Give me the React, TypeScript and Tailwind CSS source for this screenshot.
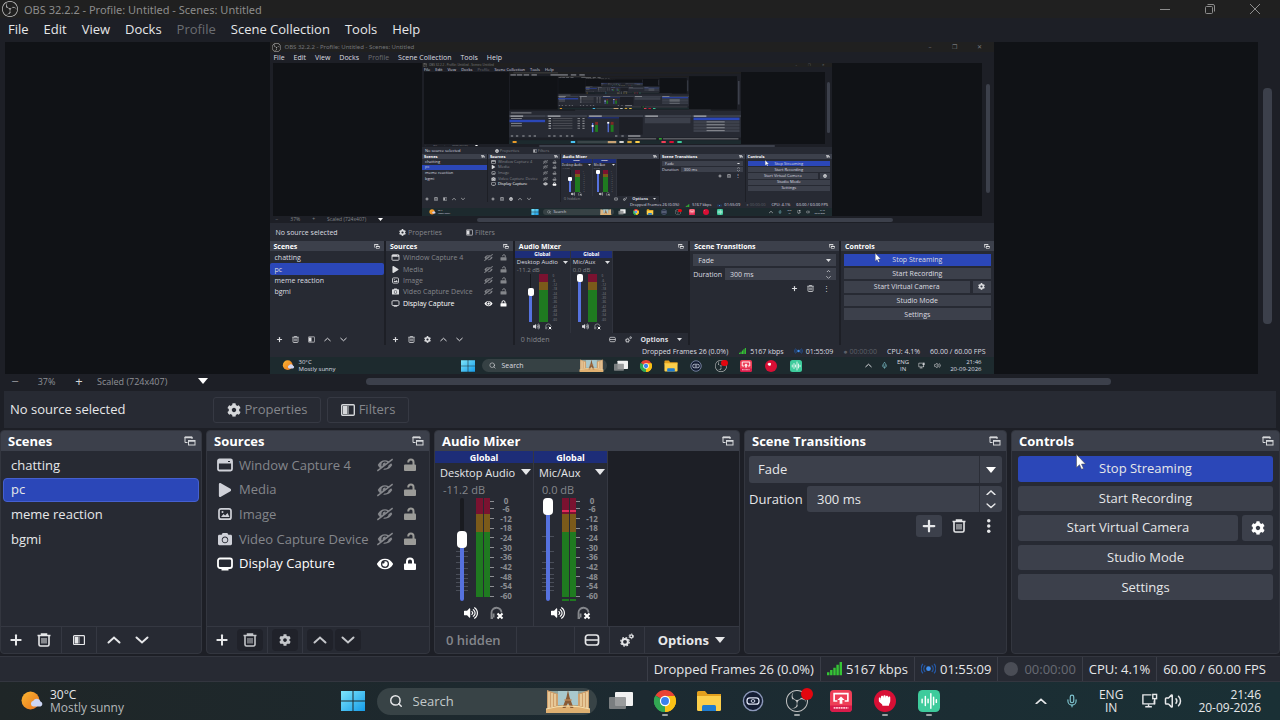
import React, { useState } from 'react';
import { FaCamera, FaCog, FaEye, FaEyeSlash, FaHandRock, FaPlay, FaVolumeUp } from 'react-icons/fa';
import { SiObsstudio } from 'react-icons/si';
import { Mic, Plus, Search, Volume2 } from 'lucide-react';

type IconProps = { className?: string };

const MENUS = ['File', 'Edit', 'View', 'Docks', 'Profile', 'Scene Collection', 'Tools', 'Help'];
const SCENES = ['chatting', 'pc', 'meme reaction', 'bgmi'];
const DB_MARKS = ['-6', '-12', '-18', '-24', '-30', '-36', '-42', '-48', '-54', '-60'];

/* ---------- icons ---------- */

const ObsIcon: React.FC<IconProps> = ({ className }) => <SiObsstudio className={`text-[#c4c4c4] ${className}`} />;

const PopoutIcon: React.FC<IconProps> = ({ className }) => (
  <svg viewBox="0 0 12 10" className={className} fill="none" stroke="currentColor">
    <path d="M3.500 6.500h-2.500v-5.500h7v2" />
    <path d="M.5 1.500h8" strokeWidth="1.400" />
    <rect x="4.500" y="4.500" width="6.500" height="4.500" />
    <path d="M4.500 5h6.500" strokeWidth="1.400" />
  </svg>
);

const CaretDown: React.FC<IconProps> = ({ className }) => (
  <svg viewBox="0 0 10 6" className={className} fill="currentColor">
    <path d="M0 0h10L5 6z" />
  </svg>
);

const Chevron: React.FC<IconProps> = ({ className }) => (
  <svg viewBox="0 0 14 8" className={className} fill="none" stroke="currentColor" strokeWidth="2" strokeLinecap="round">
    <path d="M1.500 6.500L7 1.500l5.500 5" />
  </svg>
);

const TrashIcon: React.FC<IconProps> = ({ className }) => (
  <svg viewBox="0 0 14 14" className={className} fill="none" stroke="currentColor">
    <path d="M.5 2.500h13M4.500 2.500V1h5v1.500" strokeWidth="1.500" />
    <path d="M2 3v8.500q0 1.500 1.500 1.500h7q1.500 0 1.500-1.500V3" strokeWidth="1.600" />
    <path d="M5 5v5.500M7 5v5.500M9 5v5.500" />
  </svg>
);

const FilterIcon: React.FC<IconProps> = ({ className }) => (
  <svg viewBox="0 0 14 12" className={className}>
    <rect x=".7" y=".7" width="12.600" height="10.600" rx="1" fill="none" stroke="currentColor" strokeWidth="1.400" />
    <rect x="2" y="2" width="4" height="8" fill="currentColor" />
    <rect x="6" y="2" width="2" height="8" fill="currentColor" opacity=".5" />
  </svg>
);

const WindowIcon: React.FC<IconProps> = ({ className }) => (
  <svg viewBox="0 0 16 14" className={className}>
    <rect x="1" y="1.500" width="14" height="11" rx="1.500" fill="none" stroke="currentColor" strokeWidth="1.800" />
    <path d="M1 2h14v3.500H1z" fill="currentColor" />
    <path d="M11 3.500h2" stroke="#272a33" />
  </svg>
);

const ImageIcon: React.FC<IconProps> = ({ className }) => (
  <svg viewBox="0 0 16 14" className={className}>
    <rect x="2" y="1.800" width="12" height="10.400" rx="2" fill="none" stroke="currentColor" strokeWidth="1.700" />
    <path d="M4 10l2.500-3 1.700 1.500L10.500 6 12.500 10z" fill="currentColor" />
    <circle cx="5.500" cy="5" r="1" fill="currentColor" />
  </svg>
);

const DisplayIcon: React.FC<IconProps> = ({ className }) => (
  <svg viewBox="0 0 16 14" className={className}>
    <rect x="1" y="1.500" width="14" height="9.500" rx="2" fill="none" stroke="currentColor" strokeWidth="1.800" />
    <path d="M4.500 12.500h7" stroke="currentColor" strokeWidth="1.800" />
  </svg>
);

const LockIcon: React.FC<IconProps & { open?: boolean }> = ({ className, open }) => (
  <svg viewBox="0 0 14 14" className={className}>
    <rect x="1" y="6.500" width="12" height="6.500" rx="1" fill="currentColor" />
    <path
      d={open ? 'M10.500 7V4a2.600 2.600 0 0 0-5.200 0v.6' : 'M4 7V4.400a3 3 0 0 1 6 0V7'}
      fill="none"
      stroke="currentColor"
      strokeWidth="2"
    />
  </svg>
);

const MonitorOffIcon: React.FC<IconProps> = ({ className }) => (
  <svg viewBox="0 0 14 14" className={className} fill="none">
    <path d="M3 12H1.500V7a5 5 0 0 1 10-.5" stroke="#85878c" strokeWidth="1.800" />
    <path d="M3.500 7.500v4" stroke="#85878c" strokeWidth="2" />
    <path d="M7.500 7.500l5 5M12.500 7.500l-5 5" stroke="#fff" strokeWidth="2" />
  </svg>
);

const GearsIcon: React.FC<IconProps> = ({ className }) => (
  <svg viewBox="0 0 14 14" className={className} fill="none" stroke="currentColor">
    <circle cx="5" cy="8.800" r="2.900" strokeWidth="2" />
    <circle cx="5" cy="8.800" r="4.300" strokeWidth="1.200" strokeDasharray="1.690 1.690" />
    <circle cx="11.300" cy="3.300" r="1.500" strokeWidth="1.300" />
    <circle cx="11.300" cy="3.300" r="2.400" strokeWidth=".8" strokeDasharray="1.250 1.250" />
  </svg>
);

const LayoutIcon: React.FC<IconProps> = ({ className }) => (
  <svg viewBox="0 0 16 14" className={className} fill="none" stroke="currentColor" strokeWidth="1.700">
    <rect x="1.500" y="2" width="13" height="10" rx="2.500" />
    <path d="M1.500 7h13" />
  </svg>
);

const SignalIcon: React.FC<IconProps> = ({ className }) => (
  <svg viewBox="0 0 16 14" className={className} fill="#35c535">
    <path d="M0 11h2.600v3H0zM3.300 8.500h2.600V14H3.300zM6.700 6h2.600v8H6.700zM10 3h2.600v11H10zM13.400 0H16v14h-2.600z" />
  </svg>
);

const LiveIcon: React.FC<IconProps> = ({ className }) => (
  <svg viewBox="0 0 16 12" className={className} fill="none" stroke="#2459a8" strokeWidth="1.400">
    <circle cx="8" cy="6" r="2.500" fill="#3f8ff0" stroke="none" />
    <path d="M4.500 2.500a5 5 0 0 0 0 7M11.500 2.500a5 5 0 0 1 0 7M2 1a8 8 0 0 0 0 10M14 1a8 8 0 0 1 0 10" />
  </svg>
);

const WeatherIcon: React.FC<IconProps> = ({ className }) => (
  <svg viewBox="0 0 24 20" className={className}>
    <defs>
      <linearGradient id="sun" x1="0" y1="0" x2="1" y2="1">
        <stop offset="0" stopColor="#fbb733" />
        <stop offset="1" stopColor="#e8731c" />
      </linearGradient>
    </defs>
    <circle cx="10.500" cy="9.500" r="9" fill="url(#sun)" />
    <path d="M13 15.500a3 3 0 0 1 .3-5.800 4 4 0 0 1 7.200.8 2.600 2.600 0 0 1 0 5z" fill="#cdd6f3" />
  </svg>
);

const WindowsIcon: React.FC<IconProps> = ({ className }) => (
  <svg viewBox="0 0 24 20" className={className}>
    <defs>
      <linearGradient id="win" x1="0" y1="0" x2="1" y2="1">
        <stop offset="0" stopColor="#7ee6fb" />
        <stop offset="1" stopColor="#159be8" />
      </linearGradient>
    </defs>
    <path d="M0 0h11.500v9.500H0zM12.500 0H24v9.500H12.500zM0 10.500h11.500V20H0zM12.500 10.500H24V20H12.500z" fill="url(#win)" />
  </svg>
);

const LandmarkPicture: React.FC<IconProps> = ({ className }) => (
  <svg viewBox="0 0 46 24" className={className}>
    <path d="M3 2h40l1 19H2z" fill="#8fa39c" />
    <path d="M13 2h20v14H13z" fill="#a9c8cc" />
    <path d="M1 20q22-8 44 0v4H1z" fill="#e0b071" />
    <path d="M2 1l11 4v12L2 20zM44 1L33 5v12l11 3z" fill="#cfa06c" />
    <path d="M4 3v16M7 4v14M10 5v12M36 5v12M39 4v14M42 3v16" stroke="#f5ddb0" strokeWidth="1.300" />
    <path d="M23 1l1.500 7 4 11h-3L23 14l-2.500 5h-3l4-11z" fill="#8a5a34" />
    <path d="M19 11h8" stroke="#c98f5a" />
    <path d="M1 20q22-6 44 0" fill="none" stroke="#f7e0ae" />
  </svg>
);

const TaskViewIcon: React.FC<IconProps> = ({ className }) => (
  <svg viewBox="0 0 24 20" className={className}>
    <rect x="6" y="1" width="18" height="14" rx="1" fill="#f1f1f1" />
    <rect x="0" y="6" width="17" height="12" rx="1" fill="#8b8d8e" opacity=".85" />
  </svg>
);

const ChromeIcon: React.FC<IconProps> = ({ className }) => (
  <svg viewBox="0 0 24 24" className={className}>
    <path d="M12 12L1.600 6A12 12 0 0 1 22.400 6z" fill="#e94335" />
    <path d="M12 12L22.400 6A12 12 0 0 1 12 24z" fill="#fbc116" />
    <path d="M12 12v12A12 12 0 0 1 1.600 6z" fill="#32a753" />
    <path d="M12 6.500h10.600A12 12 0 0 1 12 24l5-9.200z" fill="#fbc116" />
    <path d="M1.600 6l5.500 9L12 18l0 6A12 12 0 0 1 1.600 6z" fill="#32a753" />
    <circle cx="12" cy="12" r="5.600" fill="#fff" />
    <circle cx="12" cy="12" r="4.300" fill="#3a80ee" />
  </svg>
);

const FolderIcon: React.FC<IconProps> = ({ className }) => (
  <svg viewBox="0 0 24 22" className={className}>
    <path d="M0 2.500Q0 1 1.500 1H8l2.500 3H24v4H0z" fill="#e2a01e" />
    <path d="M0 6h24v13.500q0 1.500-1.500 1.500h-21Q0 21 0 19.500z" fill="#fccf4b" />
    <path d="M5 21v-4.500Q5 15 6.500 15h11q1.500 0 1.500 1.500V21z" fill="#1f7cd0" />
  </svg>
);

const CapsuleIcon: React.FC<IconProps> = ({ className }) => (
  <svg viewBox="0 0 24 24" className={className} fill="none" stroke="#8d99bb">
    <circle cx="12" cy="12" r="10.500" fill="#141d33" strokeWidth="1.500" />
    <rect x="5.500" y="8.500" width="13" height="7" rx="3" stroke="#dfe5f5" strokeWidth="1.400" />
    <rect x="10" y="10.500" width="4" height="3" rx="1.500" stroke="#dfe5f5" />
  </svg>
);

const CastIcon: React.FC<IconProps> = ({ className }) => (
  <svg viewBox="0 0 24 24" className={className}>
    <rect width="24" height="24" rx="4" fill="#ee3f57" />
    <path d="M0 17h24v3q0 4-4 4H4q-4 0-4-4z" fill="#d81b4a" />
    <path d="M8 12H4.500V4h15v8H16" fill="none" stroke="#fff" strokeWidth="1.800" />
    <path d="M12 7l4 4h-2.500v4h-3v-4H8z" fill="#fff" />
    <path d="M4 19.500h16" stroke="#ffc3cd" strokeWidth="2" strokeDasharray="2 .6" />
  </svg>
);

const FistIcon: React.FC<IconProps> = ({ className }) => (
  <svg viewBox="0 0 24 24" className={className}>
    <circle cx="12" cy="12" r="12" fill="#d80f35" />
    <FaHandRock x="5" y="5" width="14" height="14" color="#fff" />
  </svg>
);

const WaveIcon: React.FC<IconProps> = ({ className }) => (
  <svg viewBox="0 0 24 24" className={className}>
    <rect width="24" height="24" rx="5" fill="#3ecb9c" />
    <path d="M4.500 10v4M8 7v10M11 10v4M14 4v16M17 8v8M20 10.500v3" stroke="#fff" strokeWidth="1.600" strokeLinecap="round" />
  </svg>
);

const NetworkIcon: React.FC<IconProps> = ({ className }) => (
  <svg viewBox="0 0 18 16" className={className} fill="none" stroke="currentColor" strokeWidth="1.500">
    <path d="M11 2H2v9.500h12V8" />
    <path d="M4.500 14.500h7M8 12v2.500" />
    <rect x="12.500" y="1.500" width="4" height="4.500" />
    <path d="M14.500 6v6" />
  </svg>
);

const SOURCES = [
  { name: 'Window Capture 4', Icon: WindowIcon, on: false },
  { name: 'Media', Icon: FaPlay, on: false },
  { name: 'Image', Icon: ImageIcon, on: false },
  { name: 'Video Capture Device', Icon: FaCamera, on: false },
  { name: 'Display Capture', Icon: DisplayIcon, on: true },
];

const APPS = [
  { name: 'Chrome', Icon: ChromeIcon, running: true },
  { name: 'File Explorer', Icon: FolderIcon, running: false },
  { name: 'Capsule', Icon: CapsuleIcon, running: false },
  { name: 'OBS Studio', Icon: ObsIcon, running: true },
  { name: 'Cast', Icon: CastIcon, running: false },
  { name: 'Fist', Icon: FistIcon, running: true },
  { name: 'Wave', Icon: WaveIcon, running: true },
];

/* ---------- captured desktop shown in the preview ---------- */

// Far levels of the screen-in-screen tunnel are only blocks of colour
const FarScreen: React.FC<{ depth: number }> = ({ depth }) => (
  <g>
    <rect width="1280" height="720" fill="#1d1f26" />
    <rect width="1280" height="18" fill="#202020" />
    <rect x="24" y="5" width="246" height="8" fill="#4a4a4a" />
    {[8, 43, 81, 124, 229, 341, 388].map((x) => (
      <rect key={x} x={x} y="25" width={x === 229 ? 96 : 30} height="9" fill="#a9abaf" />
    ))}
    <rect x="5" y="42" width="1253" height="332" fill="#101216" />
    <rect x="1263" y="90" width="9" height="235" fill="#3c404b" />
    <rect x="365" y="377" width="748" height="7" fill="#3c404b" />
    <rect x="0" y="390" width="1280" height="265" fill="#272a33" />
    <rect x="10" y="404" width="114" height="10" fill="#84868b" />
    {[0, 206, 434, 744, 1011].map((x, i) => (
      <g key={x}>
        <rect x={x} y="431" width={[202, 224, 306, 263, 269][i]} height="20" fill="#3c404b" />
        <rect x={x + 8} y="436" width="70" height="10" fill="#c9cacd" />
      </g>
    ))}
    <rect x="3" y="478" width="196" height="24" fill="#2b47b8" />
    {[460, 509, 534].map((y) => (
      <rect key={y} x="11" y={y} width="60" height="9" fill="#8d8f94" />
    ))}
    {[460, 485, 509, 534, 558].map((y) => (
      <g key={y}>
        <rect x="218" y={y} width="14" height="10" fill="#b5b7bc" />
        <rect x="240" y={y} width="110" height="7" fill="#5d5f65" />
        <rect x="378" y={y} width="14" height="9" fill="#8b8d92" />
        <rect x="405" y={y} width="12" height="11" fill="#8b8d92" />
      </g>
    ))}
    <rect x="608" y="452" width="130" height="174" fill="#1d1f26" />
    <rect x="434" y="452" width="173" height="12" fill="#1d2d78" />
    {[458, 544].map((x) => (
      <g key={x}>
        <rect x={x} y="510" width="7" height="92" fill="#5672df" />
        <rect x={x - 2} y={x === 458 ? 531 : 499} width="11" height="17" fill="#fff" />
        <rect x={x + 17} y="499" width="16" height="30" fill="#7d2a25" />
        <rect x={x + 17} y="529" width="16" height="70" fill="#1f7a20" />
      </g>
    ))}
    {[10, 38, 73, 108, 136, 216, 244, 279, 314, 342, 585, 620].map((x) => (
      <rect key={x} x={x} y="635" width="13" height="10" fill="#a0a2a7" />
    ))}
    <rect x="657" y="635" width="68" height="10" fill="#c9cacd" />
    <rect x="749" y="456" width="252" height="57" fill="#3c404b" />
    <rect x="1018" y="456" width="254" height="26" fill="#2b47b8" />
    {[486, 515, 545, 574].map((y) => (
      <g key={y}>
        <rect x="1018" y={y} width="254" height="26" fill="#3c404b" />
        <rect x="1090" y={y + 9} width="100" height="8" fill="#a0a2a7" />
      </g>
    ))}
    <rect x="656" y="664" width="156" height="9" fill="#808287" />
    <rect x="827" y="662" width="16" height="13" fill="#35c535" />
    <rect x="850" y="664" width="416" height="9" fill="#808287" />
    <rect y="682" width="1280" height="38" fill="#1d2a2e" />
    <rect x="20" y="690" width="22" height="20" fill="#e89a2a" />
    <rect x="341" y="690" width="24" height="20" fill="#49c2f1" />
    <rect x="377" y="688" width="220" height="25" fill="#3a4548" />
    <rect x="545" y="690" width="46" height="22" fill="#c9a374" />
    <rect x="609" y="690" width="24" height="20" fill="#d0d0d0" />
    <rect x="653" y="689" width="24" height="22" fill="#d8a63a" />
    <rect x="697" y="690" width="24" height="20" fill="#fccf4b" />
    <rect x="841" y="690" width="24" height="20" fill="#ee3f57" />
    <rect x="885" y="690" width="24" height="20" fill="#d80f35" />
    <rect x="929" y="690" width="24" height="20" fill="#3ecb9c" />
    {depth > 0 && (
      <g transform="translate(269 42) scale(.5656 .461)">
        <FarScreen depth={depth - 1} />
      </g>
    )}
  </g>
);

const NEAR = {
  frame: 'h-[332px] w-[724px] text-[7px]',
  title: 'h-[10px] gap-[4px] px-[2px] text-[6px]',
  logo: 'size-[9px]',
  winButtons: 'gap-[20px] pr-[10px]',
  menu: 'h-[11px] gap-[9px] px-[4px]',
  previewPad: 'pl-[3px]',
  sideBar: 'w-[12px] px-[4px]',
  zoomRow: 'h-[7px] text-[5px]',
  zoomLeft: 'w-[119px] gap-[12px] px-[6px]',
  track: 'h-[4px]',
  context: 'h-[18px] pl-[6px]',
  contextLabel: 'w-[115px]',
  contextButton: 'h-[14px] w-[60px] gap-[2px]',
  docks: 'h-[104px] gap-[2px]',
  header: 'h-[10px] px-[4px]',
  popout: 'w-[6px]',
  rows: 'h-[58px] pt-[1px]',
  row: 'rounded-[2px] px-[5px]',
  rowIcon: 'w-[9px] h-[7px]',
  rowGap: 'gap-[3px]',
  rowRight: 'gap-[6px]',
  toolbar: 'h-[12px] gap-[9px] px-[6px]',
  toolIcon: 'size-[7px]',
  channel: 'w-[56px]',
  channelSmall: 'w-[42px]',
  global: 'h-[7px] text-[5px]',
  channelName: 'h-[8px] px-[2px] text-[6px]',
  caret: 'w-[5px]',
  db: 'h-[8px] text-[6px] px-[2px]',
  meters: 'h-[48px] gap-[5px]',
  fader: 'w-[3px]',
  thumb: 'h-[8px] w-[6px] rounded-[2px]',
  meter: 'w-[9px]',
  marks: 'text-[3px] leading-[4px]',
  mute: 'h-[9px] gap-[5px]',
  form: 'gap-[2px] p-[3px]',
  field: 'h-[12px] px-[5px]',
  controls: 'h-[66px] gap-[2px]',
  cog: 'w-[18px]',
  cursor: 'left-[34px] top-[2px] w-[6px]',
  status: 'h-[12px] gap-[10px] pr-[8px]',
  statusIcon: 'h-[6px] w-[9px]',
  taskbar: 'h-[17px] px-[12px]',
  weather: 'gap-[4px] text-[6px] leading-[7px]',
  weatherIcon: 'w-[13px]',
  apps: 'gap-[11px]',
  app: 'w-[14px] h-[12px]',
  search: '-mx-[4px] h-[13px] w-[125px] gap-[6px] pl-[7px] pr-[3px]',
  tray: 'gap-[9px]',
  clock: 'text-[6px] leading-[7px]',
};

const MID: typeof NEAR = {
  frame: 'h-[153px] w-[410px] text-[4px]',
  title: 'h-[4px] gap-[2px] px-[1px] text-[3px]',
  logo: 'size-[4px]',
  winButtons: 'gap-[11px] pr-[6px]',
  menu: 'h-[5px] gap-[5px] px-[2px]',
  previewPad: 'pl-[2px]',
  sideBar: 'w-[7px] px-[2px]',
  zoomRow: 'h-[3px] text-[2px]',
  zoomLeft: 'w-[67px] gap-[7px] px-[3px]',
  track: 'h-[2px]',
  context: 'h-[7px] pl-[3px]',
  contextLabel: 'w-[65px]',
  contextButton: 'h-[6px] w-[34px] gap-[1px]',
  docks: 'h-[48px] gap-[1px]',
  header: 'h-[5px] px-[2px]',
  popout: 'w-[4px]',
  rows: 'h-[28px]',
  row: 'px-[3px]',
  rowIcon: 'w-[5px] h-[4px]',
  rowGap: 'gap-[2px]',
  rowRight: 'gap-[4px]',
  toolbar: 'h-[6px] gap-[5px] px-[3px]',
  toolIcon: 'size-[4px]',
  channel: 'w-[32px]',
  channelSmall: 'w-[24px]',
  global: 'h-[4px] text-[2px]',
  channelName: 'h-[4px] px-[1px] text-[3px]',
  caret: 'w-[3px]',
  db: 'h-[3px] text-[2px] px-[1px]',
  meters: 'h-[22px] gap-[3px]',
  fader: 'w-[2px]',
  thumb: 'h-[4px] w-[4px] rounded-[1px]',
  meter: 'w-[5px]',
  marks: 'text-[1px] leading-[1px]',
  mute: 'h-[4px] gap-[3px]',
  form: 'gap-[1px] p-[2px]',
  field: 'h-[5px] px-[3px]',
  controls: 'h-[30px] gap-[1px]',
  cog: 'w-[10px]',
  cursor: 'left-[19px] top-[1px] w-[4px]',
  status: 'h-[6px] gap-[6px] pr-[4px]',
  statusIcon: 'h-[3px] w-[5px]',
  taskbar: 'h-[8px] px-[7px]',
  weather: 'gap-[2px] text-[2px] leading-[3px]',
  weatherIcon: 'w-[7px]',
  apps: 'gap-[6px]',
  app: 'w-[8px] h-[6px]',
  search: '-mx-[2px] h-[6px] w-[71px] gap-[3px] pl-[4px] pr-[2px]',
  tray: 'gap-[5px]',
  clock: 'text-[2px] leading-[3px]',
};

const CursorArrow: React.FC<IconProps> = ({ className }) => (
  <svg viewBox="0 0 10 16" className={className}>
    <path d="M.5.5v13l3-2.800 2 4.600 2-.8-2-4.500h4z" fill="#fff" stroke="#444" strokeWidth=".5" />
  </svg>
);

const CapturedDock: React.FC<{ t: typeof NEAR; title: string; children: React.ReactNode }> = ({ t, title, children }) => (
  <div className="flex min-w-0 flex-col overflow-hidden bg-[#272a33]">
    <div className={`flex shrink-0 items-center justify-between bg-[#3c404b] font-bold text-white ${t.header}`}>
      <span>{title}</span>
      <PopoutIcon className={t.popout} />
    </div>
    {children}
  </div>
);

const CapturedChannel: React.FC<{ t: typeof NEAR; name: string; db: string; width: string; level: string }> = ({
  t,
  name,
  db,
  width,
  level,
}) => (
  <div className={`flex shrink-0 flex-col border-r border-[#30333d] bg-[#272a33] ${width}`}>
    <div className={`flex items-center justify-center bg-[#1d2d78] font-bold text-white ${t.global}`}>Global</div>
    <div className={`flex items-center justify-between ${t.channelName}`}>
      <span>{name}</span>
      <CaretDown className={t.caret} />
    </div>
    <div className={`flex items-center text-[#84868b] ${t.db}`}>{db}</div>
    <div className={`flex justify-center ${t.meters}`}>
      <div className="flex flex-col items-center">
        <div className={level} />
        <div className={`shrink-0 bg-white ${t.thumb}`} />
        <div className={`flex-1 bg-[#5672df] ${t.fader}`} />
      </div>
      <div className={`flex flex-col ${t.meter}`}>
        <div className="flex-[16] bg-[#7a1230]" />
        <div className="flex-[18] bg-[#7b5a1a]" />
        <div className="flex-[66] bg-[#1f7a20]" />
      </div>
      <div className={`flex flex-col text-[#84868b] ${t.marks}`}>
        {['0', ...DB_MARKS].map((mark) => (
          <div key={mark} className="flex min-h-0 flex-1 items-center">{mark}</div>
        ))}
      </div>
    </div>
    <div className={`flex items-center justify-center ${t.mute}`}>
      <FaVolumeUp className={t.toolIcon} />
      <MonitorOffIcon className={t.toolIcon} />
    </div>
  </div>
);

const CapturedScreen: React.FC<{ t: typeof NEAR; children: React.ReactNode }> = ({ t, children }) => (
  <div className={`flex shrink-0 flex-col overflow-hidden whitespace-nowrap bg-[#1d1f26] leading-none text-[#dcdde0] ${t.frame}`}>
    <div className={`flex shrink-0 items-center bg-[#202020] font-['Noto_Sans',sans-serif] text-[#75777a] ${t.title}`}>
      <ObsIcon className={t.logo} />
      <span className="flex-1">OBS 32.2.2 - Profile: Untitled - Scenes: Untitled</span>
      <div className={`flex ${t.winButtons}`}>
        <span>–</span>
        <span>❐</span>
        <span>✕</span>
      </div>
    </div>
    <div className={`flex shrink-0 items-center ${t.menu}`}>
      {MENUS.map((menu) => (
        <span key={menu} className={menu === 'Profile' ? 'text-[#6b6d72]' : ''}>{menu}</span>
      ))}
    </div>
    <div className={`flex min-h-0 flex-1 ${t.previewPad}`}>
      <div className="flex flex-1 items-center justify-center bg-[#101216]">{children}</div>
      <div className={`flex flex-col ${t.sideBar}`}>
        <div className="flex-[14]" />
        <div className="flex-[71] rounded-full bg-[#3c404b]" />
        <div className="flex-[15]" />
      </div>
    </div>
    <div className={`flex shrink-0 items-center text-[#84868b] ${t.zoomRow}`}>
      <div className={`flex shrink-0 items-center ${t.zoomLeft}`}>
        <span>−</span>
        <span>37%</span>
        <span>+</span>
        <span>Scaled (724x407)</span>
        <CaretDown className={`shrink-0 text-white ${t.caret}`} />
      </div>
      <div className={`flex flex-1 ${t.track}`}>
        <div className="flex-[15]" />
        <div className="flex-[70] rounded-full bg-[#3c404b]" />
        <div className="flex-[17]" />
      </div>
    </div>
    <div className={`flex shrink-0 items-center bg-[#272a33] ${t.context}`}>
      <span className={t.contextLabel}>No source selected</span>
      <div className={`flex items-center justify-center text-[#84868b] ${t.contextButton}`}>
        <FaCog className={`text-[#dcdde0] ${t.toolIcon}`} />
        Properties
      </div>
      <div className={`flex items-center justify-center text-[#84868b] ${t.contextButton}`}>
        <FilterIcon className={`text-[#dcdde0] ${t.toolIcon}`} />
        Filters
      </div>
    </div>
    <div className={`grid shrink-0 grid-cols-[202fr_224fr_306fr_263fr_269fr] ${t.docks}`}>
      <CapturedDock t={t} title="Scenes">
        <div className={`grid grid-rows-5 ${t.rows}`}>
          {SCENES.map((scene) => (
            <div key={scene} className={`flex items-center ${t.row} ${scene === 'pc' ? 'bg-[#2b47b8]' : ''}`}>{scene}</div>
          ))}
        </div>
        <div className={`mt-auto flex items-center ${t.toolbar}`}>
          <Plus className={t.toolIcon} strokeWidth={4} />
          <TrashIcon className={t.toolIcon} />
          <FilterIcon className={t.toolIcon} />
          <Chevron className={t.toolIcon} />
          <Chevron className={`rotate-180 ${t.toolIcon}`} />
        </div>
      </CapturedDock>
      <CapturedDock t={t} title="Sources">
        <div className={`grid grid-rows-5 ${t.rows}`}>
          {SOURCES.map(({ name, Icon, on }) => (
            <div key={name} className={`flex items-center ${t.row} ${t.rowGap} ${on ? 'text-white' : 'text-[#84868b]'}`}>
              <Icon className={`shrink-0 text-[#dcdde0] ${t.rowIcon}`} />
              <span className="min-w-0 flex-1">{name}</span>
              <div className={`flex shrink-0 ${t.rowRight}`}>
                {on ? <FaEye className={t.rowIcon} /> : <FaEyeSlash className={`-scale-x-100 ${t.rowIcon}`} />}
                <LockIcon className={t.rowIcon} open={!on} />
              </div>
            </div>
          ))}
        </div>
        <div className={`mt-auto flex items-center ${t.toolbar}`}>
          <Plus className={t.toolIcon} strokeWidth={4} />
          <TrashIcon className={t.toolIcon} />
          <FaCog className={t.toolIcon} />
          <Chevron className={t.toolIcon} />
          <Chevron className={`rotate-180 ${t.toolIcon}`} />
        </div>
      </CapturedDock>
      <CapturedDock t={t} title="Audio Mixer">
        <div className="flex min-h-0 flex-1 bg-[#1d1f26]">
          <CapturedChannel t={t} name="Desktop Audio" db="-11.2 dB" width={t.channel} level="h-[30%] w-px bg-[#16181d]" />
          <CapturedChannel t={t} name="Mic/Aux" db="0.0 dB" width={t.channelSmall} level="h-0" />
        </div>
        <div className={`flex shrink-0 items-center ${t.toolbar}`}>
          <span className="flex-1 text-[#84868b]">0 hidden</span>
          <LayoutIcon className={t.toolIcon} />
          <GearsIcon className={t.toolIcon} />
          <span className="font-bold">Options</span>
          <CaretDown className={t.caret} />
        </div>
      </CapturedDock>
      <CapturedDock t={t} title="Scene Transitions">
        <div className={`flex flex-col ${t.form}`}>
          <div className={`flex items-center justify-between bg-[#3c404b] ${t.field}`}>
            <span>Fade</span>
            <CaretDown className={t.caret} />
          </div>
          <div className={`flex items-center ${t.rowGap}`}>
            <span>Duration</span>
            <div className={`flex flex-1 items-center justify-between bg-[#3c404b] ${t.field}`}>
              <span>300 ms</span>
              <div className="flex h-full flex-col justify-around">
                <Chevron className={t.caret} />
                <Chevron className={`rotate-180 ${t.caret}`} />
              </div>
            </div>
          </div>
          <div className={`flex items-center justify-end ${t.toolbar}`}>
            <Plus className={t.toolIcon} strokeWidth={4} />
            <TrashIcon className={t.toolIcon} />
            <span>⋮</span>
          </div>
        </div>
      </CapturedDock>
      <CapturedDock t={t} title="Controls">
        <div className={`relative ${t.form}`}>
          <div className={`grid grid-rows-5 ${t.controls}`}>
            <div className="flex items-center justify-center bg-[#2b47b8]">Stop Streaming</div>
            <div className="flex items-center justify-center bg-[#3c404b]">Start Recording</div>
            <div className={`flex ${t.rowGap}`}>
              <div className="flex flex-1 items-center justify-center bg-[#3c404b]">Start Virtual Camera</div>
              <div className={`flex items-center justify-center bg-[#3c404b] ${t.cog}`}>
                <FaCog className={t.toolIcon} />
              </div>
            </div>
            <div className="flex items-center justify-center bg-[#3c404b]">Studio Mode</div>
            <div className="flex items-center justify-center bg-[#3c404b]">Settings</div>
          </div>
          <CursorArrow className={`absolute ${t.cursor}`} />
        </div>
      </CapturedDock>
    </div>
    <div className={`flex shrink-0 items-center justify-end bg-[#272a33] ${t.status}`}>
      <span>Dropped Frames 26 (0.0%)</span>
      <div className={`flex items-center ${t.rowGap}`}>
        <SignalIcon className={t.statusIcon} />
        5167 kbps
      </div>
      <div className={`flex items-center ${t.rowGap}`}>
        <LiveIcon className={t.statusIcon} />
        01:55:09
      </div>
      <span className="text-[#5d6068]">● 00:00:00</span>
      <span>CPU: 4.1%</span>
      <span>60.00 / 60.00 FPS</span>
    </div>
    <div className={`grid shrink-0 grid-cols-[1fr_auto_1fr] items-center bg-[#1d2a2e] ${t.taskbar}`}>
      <div className={`flex items-center ${t.weather}`}>
        <WeatherIcon className={t.weatherIcon} />
        <div>
          <div>30°C</div>
          <div>Mostly sunny</div>
        </div>
      </div>
      <div className={`flex items-center ${t.apps}`}>
        <WindowsIcon className={t.app} />
        <div className={`flex items-center rounded-full bg-[#364144] ${t.search}`}>
          <Search className={t.toolIcon} />
          <span className="flex-1">Search</span>
          <LandmarkPicture className="h-full" />
        </div>
        <TaskViewIcon className={t.app} />
        {APPS.map(({ name, Icon }) => (
          <div key={name} className="relative">
            <Icon className={t.app} />
            {name === 'OBS Studio' && <span className="absolute right-0 top-0 h-1/2 w-1/2 rounded-full bg-[#e3060f]" />}
          </div>
        ))}
      </div>
      <div className={`flex items-center justify-end ${t.tray}`}>
        <Chevron className={t.toolIcon} />
        <Mic className={`text-[#7fc4cf] ${t.toolIcon}`} />
        <div className={`text-center ${t.clock}`}>
          <div>ENG</div>
          <div>IN</div>
        </div>
        <NetworkIcon className={t.toolIcon} />
        <Volume2 className={t.toolIcon} />
        <div className={`text-right ${t.clock}`}>
          <div>21:46</div>
          <div>20-09-2026</div>
        </div>
      </div>
    </div>
  </div>
);

/* ---------- main window ---------- */

const Dock: React.FC<{ title: string; children: React.ReactNode }> = ({ title, children }) => (
  <section className="flex min-w-0 flex-col overflow-hidden rounded-sm border border-[#33363f] bg-[#272a33]">
    <header className="flex h-5 shrink-0 items-center justify-between bg-[#3c404b] pl-[7px] pr-[5px]">
      <h2 className="text-[13px] font-bold text-white">{title}</h2>
      <button type="button" aria-label={`Undock ${title}`}>
        <PopoutIcon className="w-3 text-[#d5d7da]" />
      </button>
    </header>
    {children}
  </section>
);

const ToolButton: React.FC<{ label: string; dim?: boolean; children: React.ReactNode }> = ({ label, dim, children }) => (
  <button
    type="button"
    aria-label={label}
    className={`flex h-[22px] w-[26px] items-center justify-center rounded-sm ${dim ? 'bg-[#20222a] text-[#c4c6ca]' : 'text-[#e6e7e9]'}`}
  >
    {children}
  </button>
);

const Divider = () => <div className="mx-0.5 h-full w-px bg-[#353842]" />;

type ChannelProps = {
  name: string;
  db: string;
  value: number;
  peak?: boolean;
  className: string;
  faderClass: string;
  ticks: number[];
};

const Channel: React.FC<ChannelProps> = ({ name, db, value, peak, className, faderClass, ticks }) => {
  const [volume, setVolume] = useState(value);
  return (
    <div className={`flex shrink-0 flex-col border-r border-[#353842] bg-[#272a33] ${className}`}>
      <div className="flex h-3 items-center justify-center bg-[#1d2d78] text-[9px] font-bold text-white">Global</div>
      <button type="button" className="flex h-[18px] items-center justify-between pl-[5px] pr-0.5 text-[11px] text-[#e6e7e9]">
        {name}
        <CaretDown className="w-2.5" />
      </button>
      <div className="flex h-[17px] items-center pl-2 text-[11px] text-[#84868b]">{db}</div>
      <div className="flex h-[103px]">
        <div className={`relative w-3 ${faderClass}`}>
          <div className="absolute inset-y-0 left-1 w-1 rounded-full bg-[#191b20]" />
          {ticks.map((top) => (
            <div key={top} className="absolute inset-x-0 h-px bg-[#4a4e59]" style={{ top }} />
          ))}
          <div className="absolute bottom-0 left-1 w-1 rounded-full bg-[#5672df]" style={{ height: `${volume}%` }} />
          <input
            type="range"
            aria-label={`${name} volume`}
            min={0}
            max={100}
            value={volume}
            onChange={(e) => setVolume(Number(e.target.value))}
            className="absolute inset-0 h-full w-full appearance-none bg-transparent [direction:rtl] [writing-mode:vertical-lr] [&::-webkit-slider-thumb]:h-[17px] [&::-webkit-slider-thumb]:w-[10px] [&::-webkit-slider-thumb]:appearance-none [&::-webkit-slider-thumb]:rounded-[4px] [&::-webkit-slider-thumb]:bg-white"
          />
        </div>
        <div className="ml-2 flex w-3.5 gap-px">
          {[0, 1].map((bar) => (
            <div key={bar} className="flex flex-1 flex-col">
              <div className="flex h-4 flex-col justify-end bg-[#7a1230] pb-0.5">
                {peak && <div className="h-0.5 bg-[#e02a5a]" />}
              </div>
              <div className="h-[18px] bg-[#7b5a1a]" />
              <div className="h-[65px] bg-[#1f7a20]" />
              {peak && <div className="mt-0.5 h-0.5 bg-[#1f7a20]" />}
            </div>
          ))}
        </div>
        <div className="flex flex-col text-[8px] font-bold text-[#8b8d92]">
          {['0', ...DB_MARKS].map((mark) => (
            <div key={mark} className={`flex items-center ${mark === '0' ? 'h-[6px]' : 'min-h-0 flex-1'}`}>
              <span className="h-px w-1 bg-[#8b8d92]" />
              <span className="w-5 pl-1 text-center leading-none">{mark}</span>
            </div>
          ))}
        </div>
      </div>
      <div className="flex h-6 items-center justify-center gap-3">
        <button type="button" aria-label={`Mute ${name}`}>
          <FaVolumeUp className="size-3.5 text-white" />
        </button>
        <button type="button" aria-label={`Monitor ${name}`}>
          <MonitorOffIcon className="size-3.5" />
        </button>
      </div>
    </div>
  );
};

const controlButton = 'flex min-h-0 flex-1 items-center justify-center rounded-[3px] bg-[#3c404b]';

const App: React.FC = () => {
  const [scene, setScene] = useState('pc');

  return (
    <div className="flex min-h-screen flex-col whitespace-nowrap bg-[#1d1f26] font-['Open_Sans','Noto_Sans',sans-serif] text-[13px] leading-none text-[#e6e7e9]">
      {/* Title bar */}
      <header className="flex h-[18px] shrink-0 items-center bg-[#202020] pl-0.5 font-['Noto_Sans',sans-serif] text-[11px] text-[#8c8c8c]">
        <ObsIcon className="size-4" />
        <h1 className="ml-1.5 flex-1">OBS 32.2.2 - Profile: Untitled - Scenes: Untitled</h1>
        <div className="flex items-center gap-[35px] pr-5">
          <button type="button" aria-label="Minimize">
            <svg viewBox="0 0 10 10" className="size-2.5" stroke="currentColor"><path d="M0 5.500h10" /></svg>
          </button>
          <button type="button" aria-label="Restore">
            <svg viewBox="0 0 10 10" className="size-2.5" stroke="currentColor" fill="none">
              <rect x=".5" y="2.500" width="7" height="7" rx="1" />
              <path d="M2.500.5h5.500q1.500 0 1.500 1.500v5.500" />
            </svg>
          </button>
          <button type="button" aria-label="Close">
            <svg viewBox="0 0 10 10" className="size-2.5" stroke="currentColor"><path d="M0 0l10 10M10 0L0 10" /></svg>
          </button>
        </div>
      </header>

      <nav className="flex h-6 shrink-0 items-center gap-[15px] px-2 pb-0.5">
        {MENUS.map((menu) => (
          <button key={menu} type="button" disabled={menu === 'Profile'} className="disabled:text-[#6b6d72]">
            {menu}
          </button>
        ))}
      </nav>

      {/* Preview */}
      <main className="flex min-h-[332px] flex-1 pl-[5px]">
        <div className="flex flex-1 items-center justify-center overflow-hidden bg-[#101216]">
          <CapturedScreen t={NEAR}>
            <CapturedScreen t={MID}>
              <svg viewBox="0 0 1280 720" preserveAspectRatio="none" className="h-[72px] w-[232px]">
                <FarScreen depth={3} />
              </svg>
            </CapturedScreen>
          </CapturedScreen>
        </div>
        <div className="flex w-[22px] flex-col pl-[5px] pr-2">
          <div className="flex-[14]" />
          <div className="flex-[71] rounded-sm bg-[#3c404b]" />
          <div className="flex-[15]" />
        </div>
      </main>
      <div className="flex h-3.5 shrink-0 items-center pr-[22px] text-[9px] text-[#8f9196]">
        <div className="flex w-[208px] shrink-0 items-center pl-2.5">
          <button type="button" aria-label="Zoom out" className="w-2.5 text-[13px]">−</button>
          <span className="w-[53px] text-center">37%</span>
          <button type="button" aria-label="Zoom in" className="w-3 text-[13px] text-[#d5d7da]">+</button>
          <select aria-label="Preview scaling" className="ml-3 w-[101px] appearance-none bg-transparent">
            <option>Scaled (724x407)</option>
          </select>
          <CaretDown className="w-2.5 text-white" />
        </div>
        <div className="flex h-[7px] flex-1">
          <div className="flex-[15]" />
          <div className="flex-[71] rounded-sm bg-[#3c404b]" />
          <div className="flex-[14]" />
        </div>
      </div>

      {/* Source toolbar */}
      <div className="mx-1 mb-0.5 mt-[3px] flex h-[37px] shrink-0 items-center gap-1.5 bg-[#272a33] pl-1.5">
        <span className="w-[197px]">No source selected</span>
        <button type="button" className="flex h-[26px] w-[108px] items-center justify-center gap-1 rounded-[3px] border border-[#363943] text-[#84868b]">
          <FaCog className="size-3.5 text-[#d5d7da]" />
          Properties
        </button>
        <button type="button" className="flex h-[26px] w-[82px] items-center justify-center gap-1 rounded-[3px] border border-[#363943] text-[#84868b]">
          <FilterIcon className="w-3.5 text-[#d5d7da]" />
          Filters
        </button>
      </div>

      {/* Docks */}
      <div className="grid h-[224px] shrink-0 grid-cols-[202fr_224fr_306fr_263fr_269fr] gap-1">
        <Dock title="Scenes">
          <ul className="grid h-[125px] grid-rows-5 px-0.5 pt-0.5">
            {SCENES.map((name) => (
              <li key={name}>
                <button
                  type="button"
                  onClick={() => setScene(name)}
                  className={`flex h-full w-full items-center rounded border px-[7px] ${scene === name ? 'border-[#4560d0] bg-[#2b47b8]' : 'border-transparent'}`}
                >
                  {name}
                </button>
              </li>
            ))}
          </ul>
          <div className="mt-auto flex h-[27px] items-center gap-0.5 border-t border-[#353842] pl-0.5">
            <ToolButton label="Add scene"><Plus className="size-4" strokeWidth={3} /></ToolButton>
            <ToolButton label="Remove scene"><TrashIcon className="size-3.5" /></ToolButton>
            <Divider />
            <ToolButton label="Scene filters"><FilterIcon className="w-3" /></ToolButton>
            <Divider />
            <ToolButton label="Move scene up"><Chevron className="w-3.5" /></ToolButton>
            <ToolButton label="Move scene down"><Chevron className="w-3.5 rotate-180" /></ToolButton>
          </div>
        </Dock>

        <Dock title="Sources">
          <ul className="grid h-[125px] grid-rows-5 pl-2.5 pr-3 pt-0.5">
            {SOURCES.map(({ name, Icon, on }) => (
              <li key={name} className={`flex items-center ${on ? 'text-white' : 'text-[#84868b]'}`}>
                <Icon className={`h-3.5 w-4 shrink-0 ${on ? 'text-white' : 'text-[#cfd1d8]'}`} />
                <span className="ml-1.5 flex-1">{name}</span>
                <button type="button" aria-label={`Toggle ${name}`} className="mr-2.5">
                  {on ? <FaEye className="size-4" /> : <FaEyeSlash className="size-4 -scale-x-100" />}
                </button>
                <button type="button" aria-label={`Lock ${name}`}>
                  <LockIcon className={`size-3.5 ${on ? '' : 'text-[#9b9b98]'}`} open={!on} />
                </button>
              </li>
            ))}
          </ul>
          <div className="mt-auto flex h-[27px] items-center gap-0.5 border-t border-[#353842] pl-0.5">
            <ToolButton label="Add source"><Plus className="size-4" strokeWidth={3} /></ToolButton>
            <ToolButton label="Remove source" dim><TrashIcon className="size-3.5" /></ToolButton>
            <Divider />
            <ToolButton label="Source properties" dim><FaCog className="size-3" /></ToolButton>
            <Divider />
            <ToolButton label="Move source up" dim><Chevron className="w-3.5" /></ToolButton>
            <ToolButton label="Move source down" dim><Chevron className="w-3.5 rotate-180" /></ToolButton>
          </div>
        </Dock>

        <Dock title="Audio Mixer">
          <div className="flex min-h-0 flex-1 bg-[#1d1f26]">
            <Channel
              name="Desktop Audio"
              db="-11.2 dB"
              value={62}
              className="w-[99px]"
              faderClass="ml-[21px]"
              ticks={[53, 58, 64, 70, 76, 80, 84, 88, 92]}
            />
            <Channel
              name="Mic/Aux"
              db="0.0 dB"
              value={100}
              peak
              className="w-[74px]"
              faderClass="ml-2"
              ticks={[38, 53, 64, 70, 76, 80, 84, 88, 92]}
            />
          </div>
          <div className="flex h-[27px] shrink-0 items-center border-t border-[#353842]">
            <span className="w-[79px] pl-[11px] font-semibold text-[#84868b]">0 hidden</span>
            <Divider />
            <div className="flex-1" />
            <Divider />
            <button type="button" aria-label="Mixer layout" className="flex w-[30px] justify-center">
              <LayoutIcon className="w-4" />
            </button>
            <Divider />
            <button type="button" aria-label="Advanced audio" className="flex w-[30px] justify-center">
              <GearsIcon className="size-3.5" />
            </button>
            <Divider />
            <button type="button" className="flex items-center gap-1.5 pl-[11px] pr-3.5 font-bold">
              Options
              <CaretDown className="w-2.5" />
            </button>
          </div>
        </Dock>

        <Dock title="Scene Transitions">
          <div className="flex flex-col gap-[3px] px-1 pt-[5px]">
            <div className="relative h-[27px] rounded-[3px] bg-[#3c404b]">
              <select aria-label="Transition" className="h-full w-full appearance-none bg-transparent pl-[9px]">
                <option>Fade</option>
              </select>
              <div className="pointer-events-none absolute inset-y-0 right-0 flex w-[23px] items-center justify-center border-l border-[#2b2e37]">
                <CaretDown className="w-2.5 text-white" />
              </div>
            </div>
            <div className="flex h-[26px] items-center">
              <label htmlFor="duration" className="w-[58px]">Duration</label>
              <input
                id="duration"
                type="text"
                defaultValue="300 ms"
                className="h-full w-0 flex-1 rounded-l-[3px] bg-[#3c404b] pl-2.5"
              />
              <div className="flex h-full w-[23px] flex-col items-center justify-around rounded-r-[3px] border-l border-[#2b2e37] bg-[#3c404b]">
                <button type="button" aria-label="Increase duration"><Chevron className="w-2.5" /></button>
                <button type="button" aria-label="Decrease duration"><Chevron className="w-2.5 rotate-180" /></button>
              </div>
            </div>
            <div className="flex items-center justify-end gap-1">
              <button type="button" aria-label="Add transition" className="flex h-[22px] w-[26px] items-center justify-center rounded-[3px] bg-[#3c404b]">
                <Plus className="size-[18px]" strokeWidth={3} />
              </button>
              <ToolButton label="Remove transition"><TrashIcon className="size-3.5" /></ToolButton>
              <ToolButton label="Transition properties">
                <svg viewBox="0 0 4 16" className="h-3.5" fill="currentColor">
                  <circle cx="2" cy="2" r="2" />
                  <circle cx="2" cy="8" r="2" />
                  <circle cx="2" cy="14" r="2" />
                </svg>
              </ToolButton>
            </div>
          </div>
        </Dock>

        <Dock title="Controls">
          <div className="relative px-1.5 pt-[5px]">
            <div className="flex h-[144px] flex-col gap-1">
              <button type="button" className="flex min-h-0 flex-1 items-center justify-center rounded-[3px] bg-[#2b47b8]">
                Stop Streaming
              </button>
              <button type="button" className={controlButton}>Start Recording</button>
              <div className="flex min-h-0 flex-1 gap-1">
                <button type="button" className="flex flex-1 items-center justify-center rounded-[3px] bg-[#3c404b]">
                  Start Virtual Camera
                </button>
                <button type="button" aria-label="Virtual camera settings" className="flex w-[31px] items-center justify-center rounded-[3px] bg-[#3c404b]">
                  <FaCog className="size-3.5 text-white" />
                </button>
              </div>
              <button type="button" className={controlButton}>Studio Mode</button>
              <button type="button" className={controlButton}>Settings</button>
            </div>
            <CursorArrow className="absolute left-16 top-[3px] w-2.5" />
          </div>
        </Dock>
      </div>

      {/* Status bar */}
      <div className="mt-0.5 flex h-[26px] shrink-0 justify-end border-y border-[#33363f] bg-[#272a33] pr-2 [&>div]:flex [&>div]:items-center [&>div]:border-l [&>div]:border-[#3a3d47] [&>div]:px-1.5">
        <div>Dropped Frames 26 (0.0%)</div>
        <div className="gap-1"><SignalIcon className="w-[15px]" />5167 kbps</div>
        <div className="gap-1"><LiveIcon className="w-[15px]" />01:55:09</div>
        <div className="gap-1.5 text-[#686b73]">
          <span className="size-3.5 rounded-full bg-[#4a4d56]" />
          00:00:00
        </div>
        <div>CPU: 4.1%</div>
        <div>60.00 / 60.00 FPS</div>
      </div>

      {/* Taskbar */}
      <footer className="grid h-[38px] shrink-0 grid-cols-[1fr_auto_1fr] items-center bg-linear-to-r from-[#1f2627] via-[#1c2a31] to-[#1a3035] pl-5 pr-[19px]">
        <div className="flex items-center gap-1.5 text-[12px]">
          <WeatherIcon className="w-6" />
          <div className="leading-[13px]">
            <div>30°C</div>
            <div className="text-[#b4b8ba]">Mostly sunny</div>
          </div>
        </div>
        <div className="flex items-center gap-3">
          <button type="button" aria-label="Start"><WindowsIcon className="w-6" /></button>
          <label className="flex h-[27px] w-[220px] items-center gap-2.5 rounded-full bg-[#384346] pl-3 pr-1.5">
            <Search className="size-3.5" strokeWidth={2.5} />
            <input type="search" aria-label="Search" placeholder="Search" className="w-0 flex-1 bg-transparent placeholder:text-[#c3c9ca]" />
            <LandmarkPicture className="h-6" />
          </label>
          <button type="button" aria-label="Task view"><TaskViewIcon className="w-6" /></button>
          <div className="ml-2 flex items-center gap-5">
            {APPS.map(({ name, Icon, running }) => (
              <button key={name} type="button" aria-label={name} className="relative">
                <Icon className="h-[22px] w-6" />
                {name === 'OBS Studio' && <span className="absolute -right-1 -top-0.5 size-3 rounded-full bg-[#e3060f]" />}
                {running && <span className="absolute -bottom-1 left-[9px] h-0.5 w-1.5 rounded-full bg-[#9aa1a3]" />}
              </button>
            ))}
          </div>
        </div>
        <div className="flex items-center justify-end text-[12px] leading-[13px]">
          <button type="button" aria-label="Hidden icons" className="mr-[18px]"><Chevron className="w-3" /></button>
          <Mic className="mr-5 size-3.5 text-[#7fc4cf]" />
          <div className="mr-[18px] text-center">
            <div>ENG</div>
            <div>IN</div>
          </div>
          <NetworkIcon className="mr-1.5 w-[17px]" />
          <Volume2 className="mr-4 size-[18px]" />
          <div className="text-right">
            <div>21:46</div>
            <div>20-09-2026</div>
          </div>
        </div>
      </footer>
    </div>
  );
};

export default App;
